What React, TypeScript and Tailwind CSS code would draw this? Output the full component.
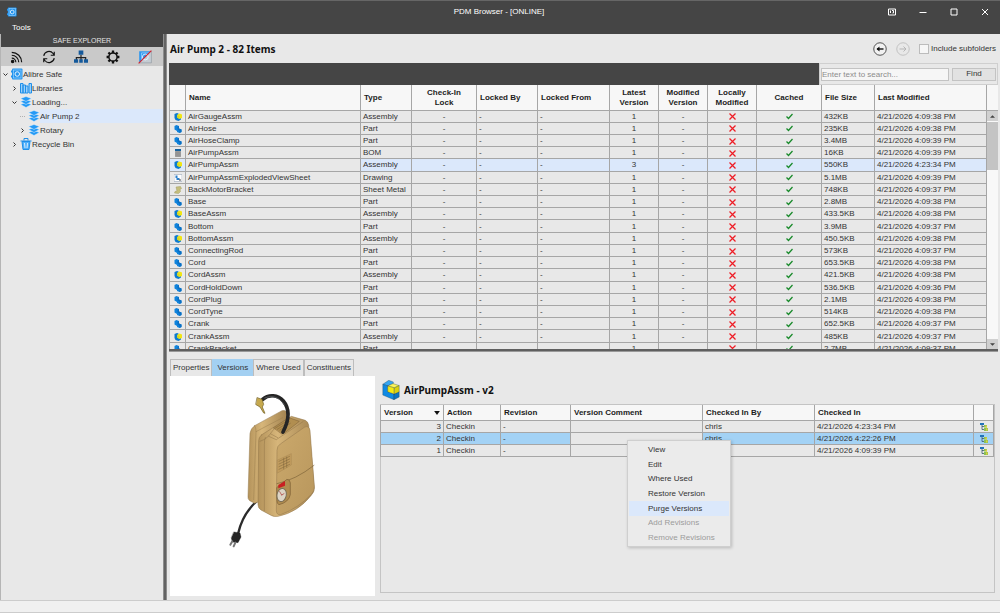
import React from "react";

type Kind = "asm" | "part" | "bom" | "drw" | "sheet";

type Item = { name: string; kind: Kind; size: string; time: string; latest?: number; selected?: boolean };

const typeNames: Record<Kind, string> = {
  asm: "Assembly",
  part: "Part",
  bom: "BOM",
  drw: "Drawing",
  sheet: "Sheet Metal",
};

const items: Item[] = [
  { name: "AirGaugeAssm", kind: "asm", size: "432KB", time: "4:09:38" },
  { name: "AirHose", kind: "part", size: "235KB", time: "4:09:38" },
  { name: "AirHoseClamp", kind: "part", size: "3.4MB", time: "4:09:39" },
  { name: "AirPumpAssm", kind: "bom", size: "16KB", time: "4:09:39" },
  { name: "AirPumpAssm", kind: "asm", size: "550KB", time: "4:23:34", latest: 3, selected: true },
  { name: "AirPumpAssmExplodedViewSheet", kind: "drw", size: "5.1MB", time: "4:09:39" },
  { name: "BackMotorBracket", kind: "sheet", size: "748KB", time: "4:09:37" },
  { name: "Base", kind: "part", size: "2.8MB", time: "4:09:38" },
  { name: "BaseAssm", kind: "asm", size: "433.5KB", time: "4:09:38" },
  { name: "Bottom", kind: "part", size: "3.9MB", time: "4:09:37" },
  { name: "BottomAssm", kind: "asm", size: "450.5KB", time: "4:09:38" },
  { name: "ConnectingRod", kind: "part", size: "573KB", time: "4:09:37" },
  { name: "Cord", kind: "part", size: "653.5KB", time: "4:09:38" },
  { name: "CordAssm", kind: "asm", size: "421.5KB", time: "4:09:38" },
  { name: "CordHoldDown", kind: "part", size: "536.5KB", time: "4:09:36" },
  { name: "CordPlug", kind: "part", size: "2.1MB", time: "4:09:38" },
  { name: "CordTyne", kind: "part", size: "514KB", time: "4:09:38" },
  { name: "Crank", kind: "part", size: "652.5KB", time: "4:09:37" },
  { name: "CrankAssm", kind: "asm", size: "485KB", time: "4:09:37" },
  { name: "CrankBracket", kind: "part", size: "2.7MB", time: "4:09:37" },
];

const versions = [
  { v: 3, date: "4/21/2026 4:23:34 PM", selected: false },
  { v: 2, date: "4/21/2026 4:22:26 PM", selected: true },
  { v: 1, date: "4/21/2026 4:09:39 PM", selected: false },
];

function ItemIcon({ kind }: { kind: Kind }) {
  return (
    <svg viewBox="0 0 16 16" className="mx-auto block size-2">
      {kind === "asm" && (
        <>
          <path d="M1 2l5-2 3 1v4l5 4v4l-5 3-6-2-2-4z" fill="#0c7bd0" />
          <path d="M6 4l5-3 5 2v7l-5 2-5-3z" fill="#f2e613" />
          <path d="M6 4l5 2v6l-5-3z" fill="#cfd62a" />
        </>
      )}
      {kind === "part" && (
        <>
          <path d="M1 2l4-2 5 2v5l5 2v5l-4 2-5-2v-2l-5-3z" fill="#0f83dc" />
          <path d="M10 2v5l5 2v5l-4 2v-5l-4-2V4z" fill="#0a6fc2" />
        </>
      )}
      {kind === "bom" && (
        <>
          <path d="M2 0h12v16H2z" fill="#a2a2a2" />
          <path d="M2 0h12v4H2z" fill="#17639f" />
          <path d="M2 8h12M2 12h12M6 4v12M10 4v12" stroke="#808080" />
        </>
      )}
      {kind === "drw" && (
        <>
          <path d="M0 1h16v14H0z" fill="#fdfdfd" stroke="#8c9bb0" />
          <path d="M3 3h4v5h4v4H5V8H3z" fill="#2b7fcb" />
          <path d="M10 12h4" stroke="#444" strokeWidth="2" />
        </>
      )}
      {kind === "sheet" && (
        <path d="M4 2l9-1 2 4-3 2 1 4-4 4-8-1 1-3 4-1-1-4z" fill="#c5be7c" stroke="#a39d60" />
      )}
    </svg>
  );
}

function SafeIcon({ className = "size-3" }: { className?: string }) {
  return (
    <svg viewBox="0 0 24 24" className={className}>
      <rect x="2" y="1" width="21" height="22" rx="2" fill="#2494ee" />
      <path d="M0 5h3v4H0zM0 15h3v4H0z" fill="#2494ee" />
      <rect x="5" y="4" width="15" height="16" fill="none" stroke="#8fd0ff" strokeWidth="1.500" />
      <circle cx="12.500" cy="12" r="4.500" fill="none" stroke="#e4f4ff" strokeWidth="2" />
    </svg>
  );
}

function LibraryIcon() {
  return (
    <svg viewBox="0 0 24 24" className="size-3" fill="#9bd0fa" stroke="#1e8fe9" strokeWidth="2">
      <path d="M1 3h5v19H1zM6 6h5v16H6zM11 8h5v14h-5zM18 3h5v19h-5z" />
    </svg>
  );
}

function LayersIcon() {
  return (
    <svg viewBox="0 0 24 24" className="size-3" fill="#249af5" stroke="#e7f3fc" strokeWidth="1">
      <path d="M12 13l11 4-11 6-11-6z" />
      <path d="M12 7l11 4-11 6L1 11z" />
      <path d="M12 1l11 4-11 6L1 5z" />
    </svg>
  );
}

function BinIcon() {
  return (
    <svg viewBox="0 0 24 24" className="size-3" fill="none" stroke="#1e8fe9" strokeWidth="2">
      <path d="M4 7h16l-2 16H6z" fill="#4fb0fb" />
      <path d="M1 6h22M8 5V1h8v4" />
      <path d="M9 10l1 10M15 10l-1 10" stroke="#d5ecff" />
    </svg>
  );
}

function Chevron({ open }: { open: boolean }) {
  return (
    <svg viewBox="0 0 10 10" className="size-[5px]" fill="none" stroke="#333" strokeWidth="2">
      <path d={open ? "M1 3l4 4 4-4" : "M3 1l4 4-4 4"} />
    </svg>
  );
}

function TreeRow({
  indent,
  open,
  icon,
  label,
  selected,
}: {
  indent: string;
  open?: boolean;
  icon: React.ReactNode;
  label: string;
  selected?: boolean;
}) {
  return (
    <li className={`flex h-3.5 items-center ${indent}`}>
      <span className="mr-[3px] w-[5px] shrink-0">
        {open === undefined ? <span className="block border-t border-dotted border-[#b0b0b0]" /> : <Chevron open={open} />}
      </span>
      <span className="shrink-0">{icon}</span>
      <span className={`flex h-full flex-1 items-center pt-px ${selected ? "bg-[#dbe8fb]" : ""}`}>{label}</span>
    </li>
  );
}

function Toolbar() {
  const button = "flex size-3.5 items-center justify-center";
  return (
    <div className="flex h-[19px] items-center gap-[18px] bg-[#c9c9c9] pl-[9px]">
      <button aria-label="Feed" className={button}>
        <svg viewBox="0 0 24 24" className="size-3.5" fill="none" stroke="#111" strokeWidth="2">
          <circle cx="4.500" cy="19.500" r="2" fill="#111" />
          <path d="M3 14a7 7 0 0 1 7 7M3 9a12 12 0 0 1 12 12M3 4a17 17 0 0 1 17 17" />
        </svg>
      </button>
      <button aria-label="Refresh" className={button}>
        <svg viewBox="0 0 24 24" className="size-3.5" fill="none" stroke="#111" strokeWidth="2">
          <path d="M3 10a9 9 0 0 1 16-4l2 3M21 3v6h-6M21 14a9 9 0 0 1-16 4l-2-3M3 21v-6h6" />
        </svg>
      </button>
      <button aria-label="Hierarchy" className={button}>
        <svg viewBox="0 0 24 24" className="size-3.5">
          <path d="M12 8v9M4 17v-4h16v4" fill="none" stroke="#222" strokeWidth="2" />
          <path d="M8 1h8v7H8zM0 16h7v6H0zM9 16h6v6H9zM17 16h7v6h-7z" fill="#14599b" />
        </svg>
      </button>
      <button aria-label="Settings" className={button}>
        <svg viewBox="0 0 24 24" className="size-3.5" fill="none" stroke="#111">
          <circle cx="12" cy="12" r="7" strokeWidth="2.500" />
          <path
            d="M12 1v4M12 19v4M1 12h4M19 12h4M4.200 4.200l3 3M16.800 16.800l3 3M4.200 19.800l3-3M16.800 7.200l3-3"
            strokeWidth="4"
          />
        </svg>
      </button>
      <button aria-label="Disconnect safe" className={button}>
        <svg viewBox="0 0 24 24" className="size-3.5">
          <path d="M2 22V2h21z" fill="#2f97ee" />
          <path d="M23 2v20H2" fill="#c4ccd3" stroke="#8b949c" />
          <path d="M6 18V5h13" fill="none" stroke="#b9dfff" />
          <circle cx="12.500" cy="12" r="5" fill="none" stroke="#eaf5ff" strokeWidth="1.500" />
          <path d="M1 23L23 1" stroke="#d3202c" strokeWidth="2" />
        </svg>
      </button>
    </div>
  );
}

function PumpPicture() {
  return (
    <svg viewBox="0 0 205 220" className="block w-full" role="img" aria-label="AirPumpAssm preview">
      <defs>
        <linearGradient id="side" x1="0" x2="1">
          <stop offset="0" stopColor="#b3925a" />
          <stop offset="0.350" stopColor="#d7b67a" />
          <stop offset="1" stopColor="#a38350" />
        </linearGradient>
        <linearGradient id="front" x1="0" x2="1" y2="1">
          <stop offset="0" stopColor="#cba96c" />
          <stop offset="1" stopColor="#b8965c" />
        </linearGradient>
      </defs>
      <g transform="translate(50 4) scale(0.3333)" strokeLinejoin="round" strokeLinecap="round">
        <path d="M116 358C88 382 66 412 55 458" fill="none" stroke="#2b2b2b" strokeWidth="7" />
        <path d="M42 456l18 3 3 12-9 17-17-2-3-12z" fill="#252525" stroke="#111" />
        <path d="M37 484l-6 10M46 488l-5 11" stroke="#777" strokeWidth="6" />
        <path d="M104 137l82-45q14-4 16 12v230l-98 36-15-8q-6-5-5-12l6-190q2-15 14-23z" fill="url(#side)" stroke="#92774a" strokeWidth="1.500" />
        <path d="M108 155l-7 204M104 137q4 4 4 18l80-42" fill="none" stroke="#9a7d4d" strokeWidth="1.500" />
        <path d="M124 165l90-56 42 12q8 4 10 14l17 190q0 12-10 22-40 50-98 62-12 2-20-2l-32-17q-9-6-9-16l2-192q0-10 8-17z" fill="url(#side)" stroke="#8d7145" strokeWidth="1.500" />
        <path d="M171 210q0-12 10-18l72-50q13-7 17 9l13 168q1 14-8 23-40 43-93 62-13 2-13-12z" fill="url(#front)" stroke="#92754a" strokeWidth="1.500" />
        <path d="M136 172q-3 8-3 22v198M120 184q15-4 26-16l18-24M146 169l23 10 80-54M153 162l20 11" fill="none" stroke="#8f7347" strokeWidth="1.500" />
        <path d="M161 143l46-30 31 11-40 32-11 6z" fill="#b18e50" stroke="#7a5e35" strokeWidth="1.500" />
        <path d="M165 145l37-23M172 148l36-23M180 150l31-20" stroke="#7a5e35" strokeWidth="1.500" />
        <path d="M128 58C146 42 174 44 190 63 210 87 210 115 189 156" fill="none" stroke="#252525" strokeWidth="11" />
        <path d="M134 54C157 44 180 52 193 75" fill="none" stroke="#55585b" strokeWidth="3" />
        <path d="M112 53l14 5 5 15-4 8 8 19-4-1-11-18-12-7z" fill="#c6a94e" stroke="#6f5e23" strokeWidth="2" />
        <path d="M171 311q57-12 111-55" fill="none" stroke="#7c6238" strokeWidth="2" />
        <path d="M173 240l41-19v34l-41 24z" fill="#c19c5e" stroke="#9a7d4d" />
        <path d="M177 244l32-15M177 252l32-15M177 260l32-15M177 268l32-15M191 235v32M200 231v31" stroke="#7a6138" strokeWidth="1.500" />
        <path d="M171 322l30-24q9 0 10 11v35q-5 23-34 30-6-2-6-10z" fill="#b08c4f" stroke="#7a5e35" strokeWidth="2" />
        <path d="M175 315l20-12v14l-20 8z" fill="#c91f22" />
        <ellipse cx="185" cy="345" rx="14" ry="20" fill="#ddd5c6" stroke="#7a6f57" strokeWidth="3" transform="rotate(12 185 345)" />
        <path d="M185 345l-6-10M185 345l7-4" stroke="#a33" strokeWidth="2" />
      </g>
    </svg>
  );
}

const thBase = "border border-[#a6a6a6] border-t-0 px-[3px] pt-0.5 leading-[10px] font-bold text-[#1c1c1c]";
const th = `${thBase} text-left`;
const thCenter = `${thBase} text-center`;
const td = "border border-[#a6a6a6] px-0.5 pt-px pb-0 leading-[10px] whitespace-nowrap";

function ItemsTable() {
  return (
    <div className="flex h-[264px] overflow-hidden">
      <div className="min-w-0 flex-1">
        <table className="h-[270px] w-full table-fixed border-collapse">
          <colgroup>
            <col className="w-4" />
            <col />
            <col className="w-[51px]" />
            <col className="w-[65px]" />
            <col className="w-[61px]" />
            <col className="w-[72px]" />
            <col className="w-[49px]" />
            <col className="w-[49px]" />
            <col className="w-[49px]" />
            <col className="w-[65px]" />
            <col className="w-[53px]" />
            <col className="w-[112px]" />
          </colgroup>
          <thead className="bg-[#f7f7f7]">
            <tr className="h-[25px]">
              <th className={th} aria-label="Icon" />
              <th className={th}>Name</th>
              <th className={th}>Type</th>
              <th className={thCenter}>Check-In<br />Lock</th>
              <th className={th}>Locked By</th>
              <th className={th}>Locked From</th>
              <th className={thCenter}>Latest<br />Version</th>
              <th className={thCenter}>Modified<br />Version</th>
              <th className={thCenter}>Locally<br />Modified</th>
              <th className={thCenter}>Cached</th>
              <th className={th}>File Size</th>
              <th className={th}>Last Modified</th>
            </tr>
          </thead>
          <tbody>
            {items.map((it, i) => (
              <tr key={i} className={it.selected ? "bg-[#dbe8fb]" : ""}>
                <td className={td}><ItemIcon kind={it.kind} /></td>
                <td className={`${td} bg-[#e8e8e8]`}>{it.name}</td>
                <td className={td}>{typeNames[it.kind]}</td>
                <td className={`${td} text-center`}>-</td>
                <td className={td}>-</td>
                <td className={td}>-</td>
                <td className={`${td} text-center`}>{it.latest ?? 1}</td>
                <td className={`${td} text-center`}>-</td>
                <td className={td}>
                  <svg viewBox="0 0 14 14" className="mx-auto block size-[7px]" fill="none" stroke="#ee1c25" strokeWidth="2.500">
                    <path d="M1 1l12 12M13 1L1 13" />
                  </svg>
                </td>
                <td className={td}>
                  <svg viewBox="0 0 14 14" className="mx-auto block size-[7px]" fill="none" stroke="#188a2a" strokeWidth="2.500">
                    <path d="M1 7l4 4 8-9" />
                  </svg>
                </td>
                <td className={td}>{it.size}</td>
                <td className={td}>4/21/2026 {it.time} PM</td>
              </tr>
            ))}
          </tbody>
        </table>
      </div>
      <div className="flex w-[11px] flex-col bg-[#f8f8f8]">
        <div className="h-[26px] border-b border-[#a6a6a6] bg-[#f7f7f7]" />
        <button aria-label="Scroll up" className="flex h-2.5 items-center justify-center bg-[#d0d0d0]">
          <svg viewBox="0 0 8 4" className="h-[3px] w-[5px]"><path d="M0 4l4-4 4 4z" fill="#444" /></svg>
        </button>
        <div className="mt-px h-12 bg-[#c4c4c4]" />
        <div className="flex-1" />
        <button aria-label="Scroll down" className="flex h-2.5 items-center justify-center bg-[#d0d0d0]">
          <svg viewBox="0 0 8 4" className="h-[3px] w-[5px]"><path d="M0 0h8L4 4z" fill="#444" /></svg>
        </button>
      </div>
    </div>
  );
}

const menu = [
  { label: "View" },
  { label: "Edit" },
  { label: "Where Used" },
  { label: "Restore Version" },
  { label: "Purge Versions", active: true },
  { label: "Add Revisions", disabled: true },
  { label: "Remove Revisions", disabled: true },
];

function VersionsPanel() {
  return (
    <section className="relative flex min-w-0 flex-1 flex-col">
      <h2 className="flex h-7 items-center gap-1 pl-0.5 font-['Noto_Sans',sans-serif] text-[10px] font-bold text-[#111]">
        <svg viewBox="0 0 54 61" className="h-5 w-[18px]" strokeLinejoin="round" stroke="#1a3a50">
          <path d="M2 13L20 1l14 5v5l-17 7z" fill="#36a6f2" />
          <path d="M2 13l15 5v18l19 7v17L2 46z" fill="#0f8ae4" />
          <path d="M36 43l16-7v16l-16 8z" fill="#0b74c4" />
          <path d="M17 18l16-7 19 6-15 7z" fill="#fbf55a" />
          <path d="M17 18l20 6v19l-20-7z" fill="#f4ea12" />
          <path d="M52 17v19l-15 7V24z" fill="#dcd20e" />
        </svg>
        AirPumpAssm - v2
      </h2>
      <div className="flex-1 border border-[#c4c4c4]">
        <table className="-ml-px w-[calc(100%+1px)] table-fixed border-collapse">
          <colgroup>
            <col className="w-[63px]" />
            <col className="w-[57px]" />
            <col className="w-[70px]" />
            <col />
            <col className="w-[112px]" />
            <col className="w-[159px]" />
            <col className="w-5" />
          </colgroup>
          <thead className="bg-[#f7f7f7]">
            <tr className="h-[15px]">
              <th className={th}>
                <span className="flex items-center justify-between">
                  Version
                  <svg viewBox="0 0 10 7" className="h-1 w-1.5"><path d="M0 0h10L5 7z" fill="#111" /></svg>
                </span>
              </th>
              <th className={th}>Action</th>
              <th className={th}>Revision</th>
              <th className={th}>Version Comment</th>
              <th className={th}>Checked In By</th>
              <th className={th}>Checked In</th>
              <th className={th} aria-label="Structure" />
            </tr>
          </thead>
          <tbody>
            {versions.map((r) => (
              <tr key={r.v} className={`h-3 ${r.selected ? "bg-[#a3d2f5]" : ""}`}>
                <td className={`${td} text-right`}>{r.v}</td>
                <td className={td}>Checkin</td>
                <td className={td}>-</td>
                <td className={`${td} bg-[#e8e8e8]`} />
                <td className={td}>chris</td>
                <td className={td}>{r.date}</td>
                <td className={td}>
                  <svg viewBox="0 0 16 16" className="mx-auto block size-2">
                    <path d="M4 4v9h4M4 7h5" fill="none" stroke="#356" strokeWidth="1.500" />
                    <path d="M0 0h8v4H0z" fill="#2273b8" />
                    <path d="M8 4h6v5H8zM8 10h8v6H8z" fill="#8cc152" />
                    <path d="M11 5h3v4h-3zM12 11h3v4h-3z" fill="#e5d43a" />
                  </svg>
                </td>
              </tr>
            ))}
          </tbody>
        </table>
      </div>
      <div
        role="menu"
        className="absolute top-16 left-[247px] flex h-[107px] w-[104px] flex-col border border-[#cfcfcf] bg-[#ebebeb] p-px shadow-[1px_1px_3px_rgba(0,0,0,0.2)]"
      >
        {menu.map((m) => (
          <button
            key={m.label}
            role="menuitem"
            disabled={m.disabled}
            className={`flex flex-1 items-center pt-px pl-[19px] ${m.active ? "bg-[#dbe8fb]" : ""} ${m.disabled ? "text-[#9b9b9b]" : ""}`}
          >
            {m.label}
          </button>
        ))}
      </div>
    </section>
  );
}

export default function App() {
  const tabs = ["Properties", "Versions", "Where Used", "Constituents"];
  return (
    <div className="flex h-screen flex-col bg-[#e8e8e8] font-['Liberation_Sans',Arial,sans-serif] text-[8px] leading-[10px] text-[#333]">
      <header className="h-[34px] shrink-0 border-t border-[#666] bg-[#454545] text-white">
        <div className="grid h-[21px] grid-cols-3 items-center pr-[11px] pl-[7px]">
          <SafeIcon className="size-[10px]" />
          <div className="pl-0.5 text-center">PDM Browser - [ONLINE]</div>
          <div className="flex justify-end gap-[23px]">
            <button aria-label="Ribbon options">
              <svg viewBox="0 0 16 16" className="size-2" fill="none" stroke="#fff" strokeWidth="2">
                <path d="M1 2h14v12H1zM5 5v5M9 10h2V5H8" />
              </svg>
            </button>
            <button aria-label="Minimize">
              <svg viewBox="0 0 16 16" className="size-2" fill="none" stroke="#fff" strokeWidth="2"><path d="M1 9h14" /></svg>
            </button>
            <button aria-label="Maximize">
              <svg viewBox="0 0 16 16" className="size-2" fill="none" stroke="#fff" strokeWidth="2"><path d="M2 2h12v12H2z" /></svg>
            </button>
            <button aria-label="Close">
              <svg viewBox="0 0 16 16" className="size-2" fill="none" stroke="#fff" strokeWidth="2"><path d="M2 2l12 12M14 2L2 14" /></svg>
            </button>
          </div>
        </div>
        <button className="block pt-px pl-3">Tools</button>
      </header>

      <div className="flex min-h-0 flex-1">
        <aside className="w-[163px] shrink-0 border-l border-[#b5b5b5]">
          <div className="h-[13px] bg-[#454545] pt-0.5 text-center text-[7px] text-[#e2e2e2]">SAFE EXPLORER</div>
          <Toolbar />
          <ul className="pt-px">
            <TreeRow indent="pl-0.5" open icon={<SafeIcon />} label="Alibre Safe" />
            <TreeRow indent="pl-[11px]" open={false} icon={<LibraryIcon />} label="Libraries" />
            <TreeRow indent="pl-[11px]" open icon={<LayersIcon />} label="Loading..." />
            <TreeRow indent="pl-[19px]" icon={<LayersIcon />} label="Air Pump 2" selected />
            <TreeRow indent="pl-[19px]" open={false} icon={<LayersIcon />} label="Rotary" />
            <TreeRow indent="pl-[11px]" open={false} icon={<BinIcon />} label="Recycle Bin" />
          </ul>
        </aside>
        <div className="w-1 shrink-0 border-x border-[#8d8d8d] bg-[#636363]" />

        <main className="flex min-w-0 flex-1 flex-col pl-0.5">
          <div className="flex h-[29px] shrink-0 items-center justify-between pr-1 pl-px">
            <h1 className="font-['Noto_Sans',sans-serif] text-[10px] font-bold text-[#111]">Air Pump 2 - 82 Items</h1>
            <div className="flex items-center gap-[9px]">
              <button aria-label="Back">
                <svg viewBox="0 0 28 28" className="size-3.5" fill="none" stroke="#222" strokeWidth="2">
                  <circle cx="14" cy="14" r="12.500" strokeWidth="1.500" fill="#f1f1f1" />
                  <path d="M8 14h13" strokeWidth="3" />
                  <path d="M13 9l-6 5 6 5z" fill="#111" stroke="none" />
                </svg>
              </button>
              <button aria-label="Forward" disabled>
                <svg viewBox="0 0 28 28" className="size-3.5" fill="none" stroke="#b5b5b5" strokeWidth="2">
                  <circle cx="14" cy="14" r="12.500" strokeWidth="1.500" />
                  <path d="M7 14h13M15 9l5 5-5 5" />
                </svg>
              </button>
              <label className="flex items-center gap-0.5">
                <input type="checkbox" className="size-2.5 appearance-none border border-[#bcbcbc] bg-[#f6f6f6]" />
                Include subfolders
              </label>
            </div>
          </div>

          <div className="flex h-[22px] shrink-0 pr-[2px]">
            <div className="flex-1 bg-[#454545]" />
            <form className="flex w-[179px] items-center gap-[3px] border border-[#cfcfcf] px-px">
              <input
                aria-label="Search"
                placeholder="Enter text to search..."
                className="h-[13px] min-w-0 flex-1 border border-[#c3c3c3] bg-[#f6f6f6] placeholder:text-[#8c8c8c]"
              />
              <button type="button" className="h-[13px] w-11 border border-[#c3c3c3] bg-[#e2e2e2]">Find</button>
            </form>
          </div>

          <div className="shrink-0 pr-[2px]">
            <ItemsTable />
            <div className="h-[3px] border-b border-[#999] bg-[#5f5f5f]" />
          </div>

          <div className="flex min-h-0 flex-1 flex-col pt-[7px] pb-1">
            <div className="flex h-[17px] shrink-0 pl-px" role="tablist">
              {tabs.map((t) => (
                <button
                  key={t}
                  role="tab"
                  aria-selected={t === "Versions"}
                  className={`border border-b-0 whitespace-nowrap ${t === "Versions" ? "border-[#a3d0f2] bg-[#a3d0f2] px-1" : "border-[#bdbdbd] px-0.5"}`}
                >
                  {t}
                </button>
              ))}
            </div>
            <div className="flex min-h-0 flex-1 gap-[5px] pr-[5px] pl-px">
              <div className="w-[205px] shrink-0 bg-white">
                <PumpPicture />
              </div>
              <div className="flex min-w-0 flex-1 pb-[3px]">
                <VersionsPanel />
              </div>
            </div>
          </div>
        </main>
      </div>

      <footer className="h-[13px] shrink-0 border-y border-[#cccccc] bg-[#f0f0f0]" />
    </div>
  );
}
